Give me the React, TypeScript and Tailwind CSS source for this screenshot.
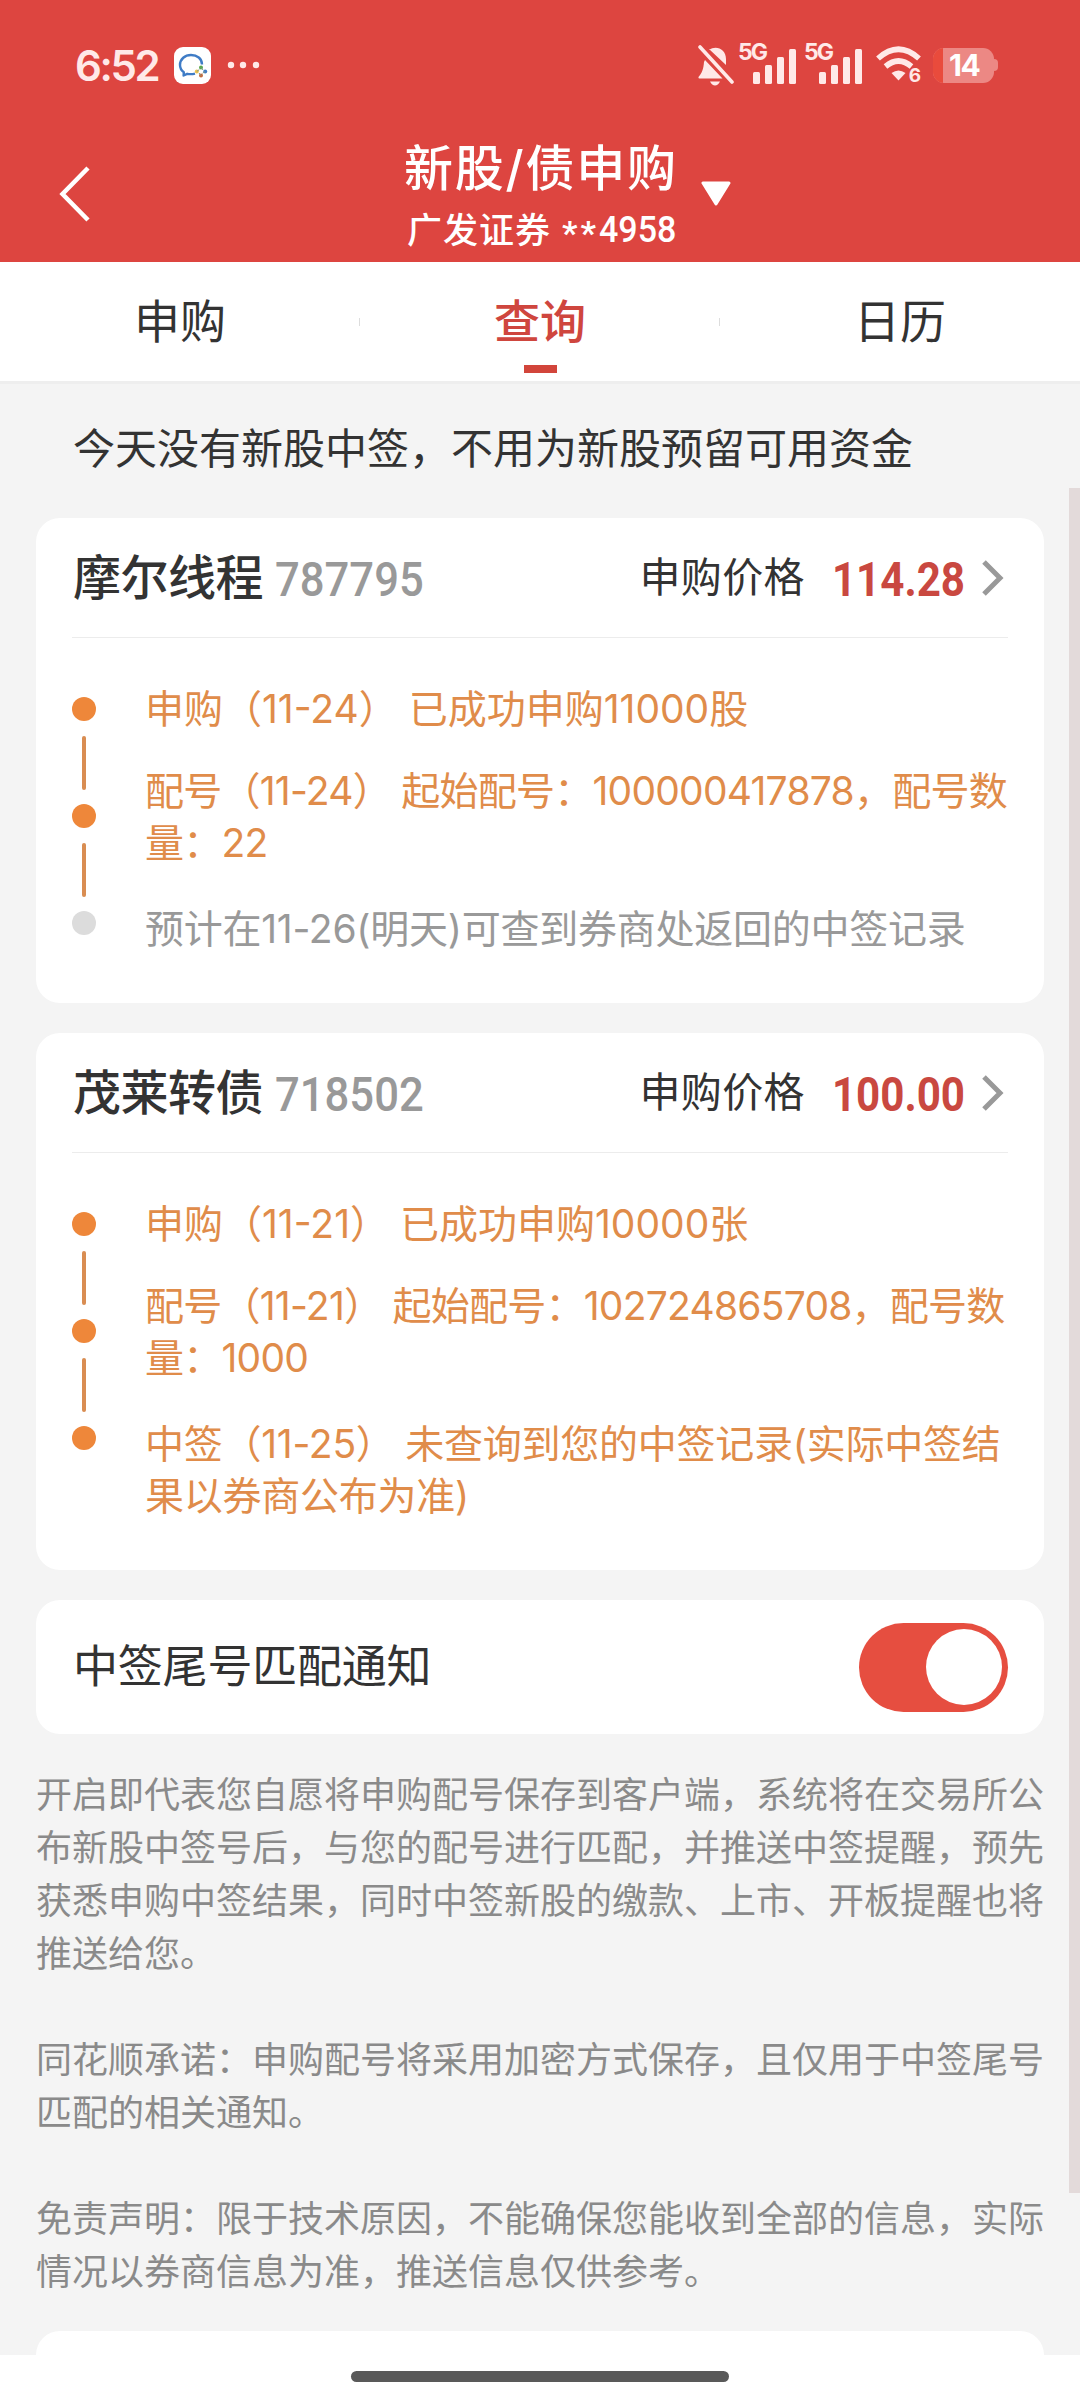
import { ReactElement } from "react";
import clsx from "clsx";

type Step = {
  lines: string[];
  done: boolean;
};

type Stock = {
  name: string;
  code: string;
  price: string;
  steps: Step[];
};

const tabs = ["申购", "查询", "日历"];

const stocks: Stock[] = [
  {
    name: "摩尔线程",
    code: "787795",
    price: "114.28",
    steps: [
      { lines: ["申购（11-24） 已成功申购11000股"], done: true },
      {
        lines: ["配号（11-24） 起始配号：100000417878，配号数", "量：22"],
        done: true,
      },
      { lines: ["预计在11-26(明天)可查到券商处返回的中签记录"], done: false },
    ],
  },
  {
    name: "茂莱转债",
    code: "718502",
    price: "100.00",
    steps: [
      { lines: ["申购（11-21） 已成功申购10000张"], done: true },
      {
        lines: ["配号（11-21） 起始配号：102724865708，配号数", "量：1000"],
        done: true,
      },
      {
        lines: [
          "中签（11-25） 未查询到您的中签记录(实际中签结",
          "果以券商公布为准)",
        ],
        done: true,
      },
    ],
  },
];

const notes = [
  [
    "开启即代表您自愿将申购配号保存到客户端，系统将在交易所公",
    "布新股中签号后，与您的配号进行匹配，并推送中签提醒，预先",
    "获悉申购中签结果，同时中签新股的缴款、上市、开板提醒也将",
    "推送给您。",
  ],
  [
    "同花顺承诺：申购配号将采用加密方式保存，且仅用于中签尾号",
    "匹配的相关通知。",
  ],
  [
    "免责声明：限于技术原因，不能确保您能收到全部的信息，实际",
    "情况以券商信息为准，推送信息仅供参考。",
  ],
];

function Signal(): ReactElement {
  return (
    <div className="relative h-[42px] w-[60px]">
      <span className="absolute -left-[1px] -top-[1px] text-[23px] leading-[19px] font-bold tracking-[-2px]">
        5G
      </span>
      <svg
        className="absolute left-[14px] top-[5px]"
        width="44"
        height="35"
        fill="currentColor"
      >
        <rect x="0" y="23" width="7" height="12" rx="1.5" />
        <rect x="12" y="16" width="7" height="19" rx="1.5" />
        <rect x="24" y="8" width="7" height="27" rx="1.5" />
        <rect x="36" y="0" width="7" height="35" rx="1.5" />
      </svg>
    </div>
  );
}

function StatusBar(): ReactElement {
  return (
    <div className="flex h-[130px] items-center pl-[75px] pr-[82px] text-[#ffe9e8]">
      <span className="w-[99px] text-[42px] font-semibold tracking-[-2.4px]">
        6:52
      </span>
      <svg width="37" height="37" viewBox="0 0 37 37">
        <rect width="37" height="37" rx="9" fill="#fff" />
        <path
          d="M28 17.5C28 11.5 23 8 17 8S6 12 6 18C6 21.5 7.5 23.5 9.8 25.2L9.6 28.5L13.2 26.8Q17 27.6 21 26.6"
          fill="none"
          stroke="#3f7cc6"
          strokeWidth="2.4"
          strokeLinejoin="round"
        />
        <circle cx="27" cy="20.5" r="2" fill="#5aa84b" />
        <circle cx="31.2" cy="24.4" r="2" fill="#3f7cc6" />
        <circle cx="27" cy="28.6" r="2" fill="#c5693c" />
        <circle cx="22.8" cy="24.4" r="2" fill="#ebc14f" />
        <path
          d="M27 20.5L29 23M31.2 24.4L28.5 26.3M27 28.6L25 26M22.8 24.4L25.3 22.6"
          stroke="#7d9a8a"
          strokeWidth="1"
        />
      </svg>
      <svg className="ml-[16px]" width="34" height="8" fill="currentColor">
        <circle cx="4" cy="4" r="3.2" />
        <circle cx="16" cy="4" r="3.2" />
        <circle cx="29" cy="4" r="3.2" />
      </svg>
      <div className="ml-auto flex items-center">
        <svg
          className="mr-[5px]"
          width="36"
          height="42"
          viewBox="0 0 36 42"
          fill="currentColor"
        >
          <path d="M11 6C18 .8 28 5 28 15V21L11 5Z" />
          <path d="M7 16L24.5 34.5H1.5Q-.2 34.5 .8 32.5C4 29 5.5 25 6 18Z" />
          <path d="M12 37.5H22Q20 41.5 17 41.5T12 37.5Z" />
          <path
            d="M2 3L34 38"
            stroke="currentColor"
            strokeWidth="3.6"
            strokeLinecap="round"
          />
        </svg>
        <Signal />
        <div className="w-[6px]" />
        <Signal />
        <div className="relative ml-[11px] h-[38px] w-[46px]">
          <svg width="46" height="38" viewBox="0 0 46 38" fill="none">
            <path
              d="M2 12.5Q22.5 -6 43 12.5"
              stroke="currentColor"
              strokeWidth="5.6"
            />
            <path
              d="M9.5 20.5Q22.5 9.5 35.5 20.5"
              stroke="currentColor"
              strokeWidth="5.6"
            />
            <path
              d="M15.5 27Q22.5 22 29.5 27L22.5 34.5Z"
              fill="currentColor"
            />
          </svg>
          <span className="absolute right-[1px] bottom-0 text-[19px] leading-[16px] font-bold">
            6
          </span>
        </div>
        <div className="ml-[11px] flex items-center">
          <div className="flex h-[35px] w-[61px] overflow-hidden rounded-[11px] bg-[#ec8884]">
            <div className="w-[10px] bg-[#e94b3c]" />
            <span className="flex-1 pl-[6px] text-[30px] leading-[35px] font-bold tracking-[-1.5px] text-white">
              14
            </span>
          </div>
          <div className="h-[12px] w-[4px] rounded-r-[4px] bg-[#ec8884]" />
        </div>
      </div>
    </div>
  );
}

function Header(): ReactElement {
  return (
    <header className="h-[262px] bg-[#dd4540] text-white">
      <StatusBar />
      <div className="flex h-[132px] items-start">
        <svg
          className="mt-[36px] ml-[59px]"
          width="32"
          height="56"
          fill="none"
          stroke="currentColor"
          strokeWidth="4.5"
        >
          <path d="M29 2L3.5 28L29 54" />
        </svg>
        <div className="ml-[313px] w-[272px]">
          <h1 className="mt-[8px] h-[72px] text-[49px] leading-[62px] font-medium tracking-[1.8px] whitespace-nowrap">
            新股/债申购
          </h1>
          <p className="flex h-[40px] items-center gap-[11px] pl-[3px] text-[35px] leading-[40px] font-medium whitespace-nowrap">
            <span className="tracking-[1px]">广发证券</span>
            <span className="flex font-[Roboto]">
              <span className="pt-[6px] text-[34px] font-bold tracking-[3px]">
                **
              </span>
              <span className="origin-left scale-x-[0.92] pt-[3px] text-[37px]">
                4958
              </span>
            </span>
          </p>
        </div>
        <svg className="mt-[51px] ml-[25px]" width="30" height="26">
          <path
            d="M2 2H28L15 23Z"
            fill="#fff"
            stroke="#fff"
            strokeWidth="3"
            strokeLinejoin="round"
          />
        </svg>
      </div>
    </header>
  );
}

function StockCard({ stock }: { stock: Stock }): ReactElement {
  return (
    <section className="rounded-[24px] bg-white px-[36px] pb-[48px]">
      <div className="flex h-[120px] items-center border-b border-[#ececec]">
        <h2 className="pl-px text-[48px] font-medium leading-none tracking-[-0.5px]">
          {stock.name}
        </h2>
        <span className="ml-[12px] origin-left scale-x-[0.89] pt-[4px] font-[Roboto] text-[49px] leading-none font-medium text-[#999]">
          {stock.code}
        </span>
        <span className="ml-auto text-[41px] leading-none tracking-[0.4px]">
          申购价格
        </span>
        <span className="w-[160px] origin-right scale-x-[0.86] pt-[4px] text-right font-[Roboto] text-[49px] leading-none font-bold text-[#c94840]">
          {stock.price}
        </span>
        <svg
          className="mr-[4px] ml-[17px]"
          width="22"
          height="36"
          fill="none"
          stroke="#999"
          strokeWidth="5"
        >
          <path d="M2 2L18 18L2 34" />
        </svg>
      </div>
      <div className="flex pt-[45px]">
        <div className="flex w-[24px] flex-col items-center pt-[14px]">
          {stock.steps.map((step, i) => (
            <div key={i} className="flex flex-col items-center">
              {i > 0 && (
                <div className="mt-[15px] mb-[14px] h-[54px] w-[4px] rounded-full bg-[#d98d52]" />
              )}
              <div
                className={clsx(
                  "size-[24px] rounded-full",
                  step.done ? "bg-[#ee873a]" : "bg-[#dcdcdc]"
                )}
              />
            </div>
          ))}
        </div>
        <div className="ml-[49px] flex-1">
          {stock.steps.map((step, i) => (
            <div
              key={i}
              className={clsx(
                "text-[39px] leading-[52px] whitespace-pre",
                i === 1 && "mt-[30px] tracking-[-0.75px]",
                i === 2 && "mt-[34px] tracking-[-0.25px]",
                step.done ? "text-[#e08c4a]" : "text-[#999]"
              )}
            >
              {step.lines.map((line) => (
                <p key={line}>{line}</p>
              ))}
            </div>
          ))}
        </div>
      </div>
    </section>
  );
}

export default function App(): ReactElement {
  return (
    <div className="relative flex h-[2400px] w-[1080px] flex-col overflow-hidden bg-white font-[Inter,'Noto_Sans_CJK_SC',sans-serif] text-[#333]">
      <Header />

      <nav className="flex h-[122px] items-center border-b-[3px] border-[#eeeeee] bg-white">
        {tabs.map((tab, i) => (
          <div
            key={tab}
            className={clsx(
              "relative flex h-full flex-1 items-center justify-center text-[46px]",
              i === 1 && "font-medium text-[#cf463e]"
            )}
          >
            {tab}
            {i === 1 && (
              <div className="absolute bottom-[8px] h-[8px] w-[33px] bg-[#d2453b]" />
            )}
            {i > 0 && (
              <div className="absolute -left-px h-[8px] w-px bg-[#dddddd]" />
            )}
          </div>
        ))}
      </nav>

      <main className="flex h-[1971px] flex-col overflow-hidden bg-[#f4f4f4] px-[36px]">
        <p className="h-[134px] shrink-0 pt-[35px] pl-[37px] text-[42px] leading-[60px]">
          今天没有新股中签，不用为新股预留可用资金
        </p>
        <div className="flex flex-col gap-[30px]">
          {stocks.map((stock) => (
            <StockCard key={stock.code} stock={stock} />
          ))}
          <section className="flex h-[134px] items-center justify-between rounded-[24px] bg-white px-[36px]">
            <span className="pl-px text-[45px] tracking-[-0.2px]">
              中签尾号匹配通知
            </span>
            <div className="flex h-[89px] w-[149px] items-center justify-end rounded-full bg-[#e64e40] pr-[6px]">
              <div className="size-[76px] rounded-full bg-white" />
            </div>
          </section>
        </div>
        <div className="mt-[35px] flex flex-col gap-[53px] text-[36px] leading-[53px] whitespace-nowrap text-[#8a8a8a]">
          {notes.map((note) => (
            <div key={note[0]}>
              {note.map((line) => (
                <p key={line}>{line}</p>
              ))}
            </div>
          ))}
        </div>
        <div className="mt-[32px] h-[60px] shrink-0 rounded-t-[24px] bg-white" />
      </main>

      <div className="flex flex-1 justify-center pt-[16px]">
        <div className="h-[11px] w-[378px] rounded-full bg-[#595959]" />
      </div>

      <div className="absolute top-[488px] right-0 h-[1705px] w-[11px] bg-[#e3dada]" />
    </div>
  );
}
